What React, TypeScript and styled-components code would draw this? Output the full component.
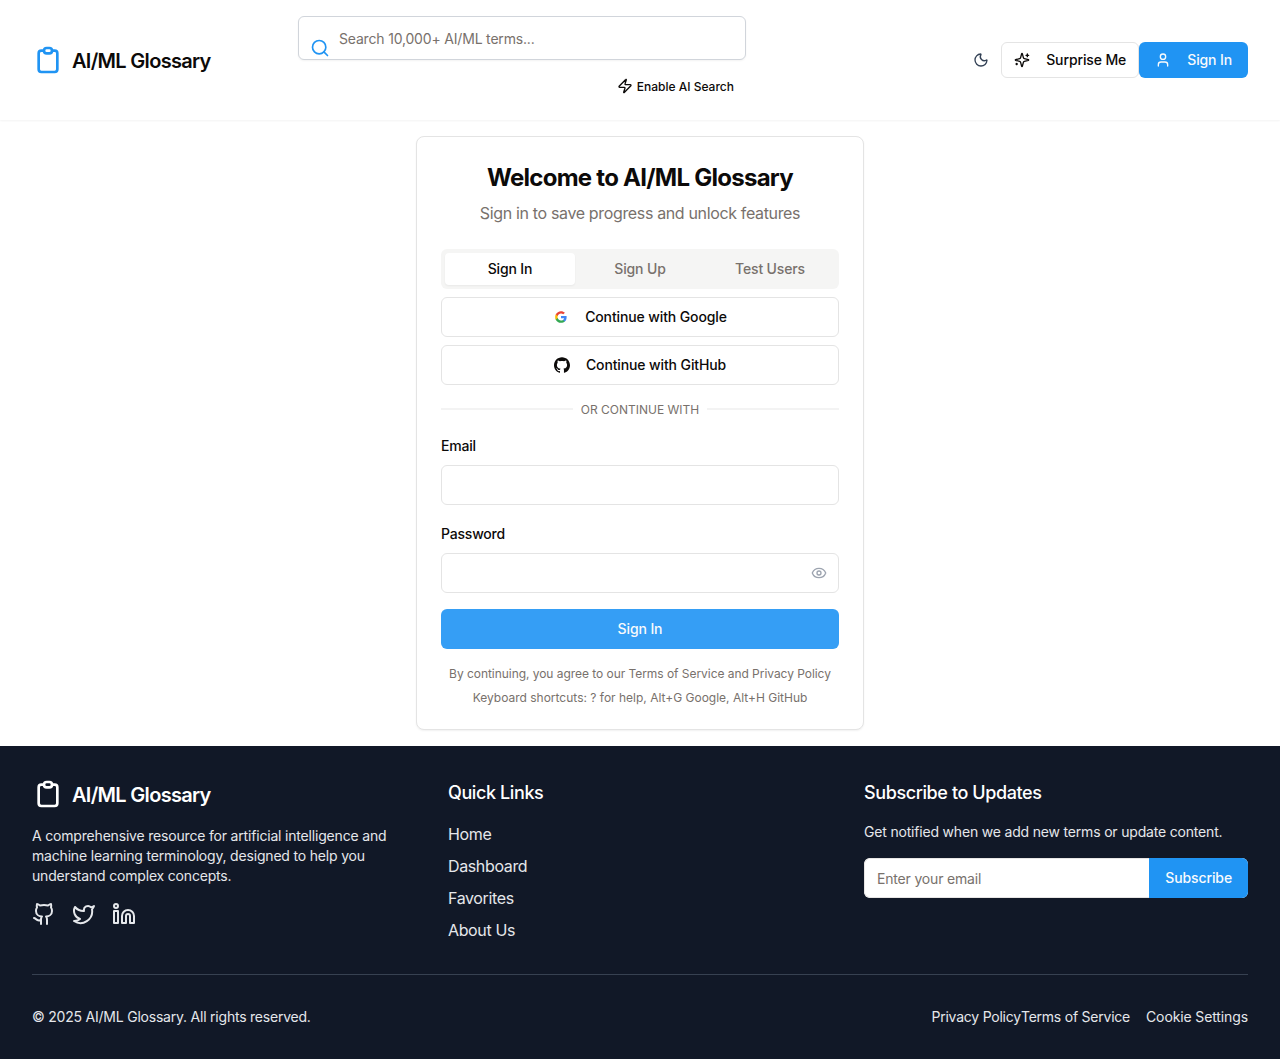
import React from "react";
import styled, { createGlobalStyle } from "styled-components";
import { Github, Linkedin, Moon, Search, Twitter, User } from "lucide-react";

const GlobalStyle = createGlobalStyle`
  *, *::before, *::after { box-sizing: border-box; }
  body {
    margin: 0;
    background: #fff;
    color: #0c0a09;
    font-family: Inter, "Liberation Sans", sans-serif;
    font-size: 16px;
    line-height: 24px;
    -webkit-font-smoothing: antialiased;
  }
  h1, h2, h3, p, ul { margin: 0; padding: 0; }
  ul { list-style: none; }
  a { color: inherit; text-decoration: none; }
  button, input { font-family: inherit; }
  svg { display: block; flex: none; }
`;

const Header = styled.header`
  display: flex;
  align-items: center;
  height: 120px;
  padding: 16px 32px;
  background: #fff;
  box-shadow: 0 1px 2px rgba(0, 0, 0, 0.05);
`;

const Brand = styled.a<{ $tone: string; $ink: string }>`
  display: flex;
  align-items: center;
  gap: 8px;
  width: 179px;
  height: 32px;
  color: ${(p) => p.$tone};
  span {
    color: ${(p) => p.$ink};
    font-size: 20px;
    line-height: 28px;
    font-weight: 600;
    letter-spacing: -0.69px;
    white-space: nowrap;
    padding-top: 1px;
  }
`;

const SearchColumn = styled.div`
  display: flex;
  flex-direction: column;
  width: 448px;
  height: 88px;
  margin-left: 87px;
`;

const SearchBox = styled.label`
  display: flex;
  height: 44px;
  padding: 0 12px 0 11px;
  gap: 9px;
  border: 1px solid #d1d5db;
  border-radius: 6px;
  background: #fff;
  box-shadow: 0 1px 2px rgba(0, 0, 0, 0.05);
  color: #2094f3;
  svg { margin-top: 21px; }
`;

const PlainInput = styled.input`
  flex: 1;
  min-width: 0;
  border: 0;
  outline: 0;
  padding: 0;
  background: transparent;
  font-size: 14px;
  letter-spacing: -0.18px;
  color: #0c0a09;
  &::placeholder { color: #78716c; opacity: 1; }
`;

const AiToggle = styled.button`
  display: flex;
  align-items: center;
  align-self: flex-end;
  gap: 4px;
  height: 28px;
  margin-top: 12px;
  padding: 0 12px;
  border: 0;
  background: transparent;
  color: #0c0a09;
  font-size: 12px;
  font-weight: 500;
`;

const Actions = styled.div`
  display: flex;
  align-items: center;
  margin-left: auto;
`;

const IconButton = styled.button`
  display: flex;
  align-items: center;
  justify-content: center;
  width: 40px;
  height: 36px;
  padding: 0;
  border: 0;
  background: transparent;
  color: #334155;
`;

const Button = styled.button<{ $solid?: boolean; $height?: number; $faded?: boolean }>`
  display: flex;
  align-items: center;
  justify-content: center;
  gap: 16px;
  height: ${(p) => p.$height ?? 40}px;
  padding: 0 ${(p) => (p.$solid ? 16 : 12)}px;
  border: ${(p) => (p.$solid ? "0" : "1px solid #e4e4e4")};
  border-radius: 6px;
  background: ${(p) => (p.$solid ? "#2094f3" : "#fff")};
  ${(p) => p.$faded && "background: #359ef5;"}
  color: ${(p) => (p.$solid ? "#f8fafc" : "#0c0a09")};
  font-size: 14px;
  font-weight: 500;
  letter-spacing: -0.12px;
  line-height: 20px;
  white-space: nowrap;
`;

const Main = styled.main`
  display: flex;
  justify-content: center;
  padding: 16px 0;
`;

const Card = styled.section`
  display: flex;
  flex-direction: column;
  width: 448px;
  height: 594px;
  padding: 24px 24px 20px;
  border: 1px solid #e4e4e4;
  border-radius: 8px;
  background: #fff;
  box-shadow: 0 1px 2px rgba(0, 0, 0, 0.06);
`;

const Title = styled.h1`
  padding-top: 1px;
  font-size: 24px;
  line-height: 32px;
  font-weight: 700;
  letter-spacing: -0.74px;
  text-align: center;
`;

const Subtitle = styled.p`
  margin: 7px 0 24px;
  color: #78716c;
  letter-spacing: -0.35px;
  text-align: center;
`;

const Tabs = styled.div`
  display: grid;
  flex: none;
  grid-template-columns: repeat(3, 1fr);
  height: 40px;
  padding: 4px;
  border-radius: 6px;
  background: #f5f5f4;
`;

const Tab = styled.button<{ $active?: boolean }>`
  padding: 0;
  border: 0;
  border-radius: 4px;
  background: ${(p) => (p.$active ? "#fff" : "transparent")};
  box-shadow: ${(p) => (p.$active ? "0 1px 2px rgba(0,0,0,0.05)" : "none")};
  color: ${(p) => (p.$active ? "#0c0a09" : "#78716c")};
  font-size: 14px;
  font-weight: 500;
  line-height: 20px;
  letter-spacing: -0.14px;
`;

const Providers = styled.div`
  display: grid;
  gap: 8px;
  margin-top: 8px;
`;

const Divider = styled.div`
  display: flex;
  flex: none;
  align-items: center;
  gap: 8px;
  margin: 16px 0;
  height: 16px;
  color: #78716c;
  font-size: 12px;
  line-height: 16px;
  span { padding-top: 2px; }
  &::before, &::after {
    content: "";
    flex: 1;
    height: 2px;
    background: #f3f3f3;
  }
`;

const Form = styled.form`
  display: grid;
  gap: 16px;
`;

const Field = styled.label`
  display: grid;
  gap: 7px;
  padding-top: 1px;
  font-size: 14px;
  line-height: 24px;
  font-weight: 500;
  letter-spacing: -0.2px;
`;

const InputFrame = styled.span`
  display: flex;
  align-items: center;
  height: 40px;
  padding: 0 11px;
  border: 1px solid #e4e4e4;
  border-radius: 6px;
  background: #fff;
  color: #9ca3af;
`;

const Note = styled.p<{ $top: number; $tracking?: number }>`
  margin-top: ${(p) => p.$top}px;
  color: #78716c;
  font-size: 12px;
  line-height: 16px;
  letter-spacing: ${(p) => p.$tracking ?? 0}px;
  text-align: center;
`;

const Footer = styled.footer`
  height: 313px;
  padding: 32px;
  background: #111827;
  color: #e5e7eb;
`;

const FooterGrid = styled.div`
  display: grid;
  grid-template-columns: repeat(3, 1fr);
  gap: 32px;
  height: 164px;
`;

const FooterText = styled.p<{ $top: number }>`
  margin-top: ${(p) => p.$top}px;
  font-size: 14px;
  line-height: 20px;
  letter-spacing: -0.185px;
`;

const Socials = styled.div`
  display: flex;
  gap: 16px;
  margin-top: 16px;
`;

const FooterHeading = styled.h3`
  padding-top: 1px;
  color: #fff;
  font-size: 18px;
  line-height: 28px;
  font-weight: 500;
  letter-spacing: -0.4px;
`;

const LinkList = styled.ul`
  display: grid;
  gap: 8px;
  margin-top: 15px;
  letter-spacing: -0.37px;
`;

const Subscribe = styled.form`
  display: flex;
  height: 40px;
  margin-top: 16px;
  border-radius: 6px;
  overflow: hidden;
  background: #fff;
  ${PlainInput} {
    padding-left: 12px;
    border: 1px solid #e7e5e4;
    border-right: 0;
    border-radius: 6px 0 0 6px;
  }
  ${Button} { border-radius: 0; }
`;

const Legal = styled.div`
  display: flex;
  align-items: center;
  justify-content: space-between;
  margin-top: 32px;
  padding-top: 32px;
  border-top: 1px solid #374151;
  font-size: 14px;
  line-height: 20px;
  letter-spacing: -0.22px;
`;

const LegalLinks = styled.div`
  display: flex;
  a { letter-spacing: -0.23px; }
  a:last-child { margin-left: 16px; letter-spacing: -0.12px; }
`;

const Clipboard = () => (
  <svg width="32" height="32" viewBox="0 0 24 24" fill="none" stroke="currentColor" strokeWidth="2" strokeLinecap="round" strokeLinejoin="round">
    <path d="M9 5H7a2 2 0 00-2 2v12a2 2 0 002 2h10a2 2 0 002-2V7a2 2 0 00-2-2h-2M9 5a2 2 0 002 2h2a2 2 0 002-2M9 5a2 2 0 012-2h2a2 2 0 012 2" />
  </svg>
);

const Bolt = () => (
  <svg width="16" height="16" viewBox="0 0 24 24" fill="none" stroke="currentColor" strokeWidth="2" strokeLinecap="round" strokeLinejoin="round">
    <path d="M4 14a1 1 0 0 1-.78-1.63l9.9-10.2a.5.5 0 0 1 .86.46l-1.92 6.02A1 1 0 0 0 13 10h7a1 1 0 0 1 .78 1.63l-9.9 10.2a.5.5 0 0 1-.86-.46l1.92-6.02A1 1 0 0 0 11 14z" />
  </svg>
);

const Sparkles = () => (
  <svg width="16" height="16" viewBox="0 0 24 24" fill="none" stroke="currentColor" strokeWidth="2" strokeLinecap="round" strokeLinejoin="round">
    <path d="M9.937 15.5A2 2 0 0 0 8.5 14.063l-6.135-1.582a.5.5 0 0 1 0-.962L8.5 9.936A2 2 0 0 0 9.937 8.5l1.582-6.135a.5.5 0 0 1 .963 0L14.063 8.5A2 2 0 0 0 15.5 9.937l6.135 1.581a.5.5 0 0 1 0 .964L15.5 14.063a2 2 0 0 0-1.437 1.437l-1.582 6.135a.5.5 0 0 1-.963 0z" />
    <path d="M20 3v4M22 5h-4M4 17v2M5 18H3" />
  </svg>
);

const EyeIcon = () => (
  <svg width="16" height="16" viewBox="0 0 24 24" fill="none" stroke="currentColor" strokeWidth="2" strokeLinecap="round" strokeLinejoin="round">
    <path d="M2.062 12.348a1 1 0 0 1 0-.696 10.75 10.75 0 0 1 19.876 0 1 1 0 0 1 0 .696 10.75 10.75 0 0 1-19.876 0" />
    <circle cx="12" cy="12" r="3" />
  </svg>
);

const GoogleMark = () => (
  <svg width="16" height="16" viewBox="-3 -3 30 30">
    <path fill="#4285F4" d="M22.56 12.25c0-.78-.07-1.53-.2-2.25H12v4.26h5.92c-.26 1.37-1.04 2.53-2.21 3.31v2.77h3.57c2.08-1.92 3.28-4.74 3.28-8.09z" />
    <path fill="#34A853" d="M12 23c2.97 0 5.46-.98 7.28-2.66l-3.57-2.77c-.98.66-2.23 1.06-3.71 1.06-2.86 0-5.29-1.93-6.16-4.53H2.18v2.84C3.99 20.53 7.7 23 12 23z" />
    <path fill="#FBBC05" d="M5.84 14.09c-.22-.66-.35-1.36-.35-2.09s.13-1.43.35-2.09V7.07H2.18C1.43 8.55 1 10.22 1 12s.43 3.45 1.18 4.93l3.66-2.84z" />
    <path fill="#EA4335" d="M12 5.38c1.62 0 3.06.56 4.21 1.64l3.15-3.15C17.45 2.09 14.97 1 12 1 7.7 1 3.99 3.47 2.18 7.07l3.66 2.84c.87-2.6 3.3-4.53 6.16-4.53z" />
  </svg>
);

const GithubMark = () => (
  <svg width="16" height="16" viewBox="0 0 24 24" fill="currentColor">
    <path d="M12 .297c-6.63 0-12 5.373-12 12 0 5.303 3.438 9.8 8.205 11.385.6.113.82-.258.82-.577 0-.285-.01-1.04-.015-2.04-3.338.724-4.042-1.61-4.042-1.61C4.422 18.07 3.633 17.7 3.633 17.7c-1.087-.744.084-.729.084-.729 1.205.084 1.838 1.236 1.838 1.236 1.07 1.835 2.809 1.305 3.495.998.108-.776.417-1.305.76-1.605-2.665-.3-5.466-1.332-5.466-5.93 0-1.31.465-2.38 1.235-3.22-.135-.303-.54-1.523.105-3.176 0 0 1.005-.322 3.3 1.23.96-.267 1.98-.399 3-.405 1.02.006 2.04.138 3 .405 2.28-1.552 3.285-1.23 3.285-1.23.645 1.653.24 2.873.12 3.176.765.84 1.23 1.91 1.23 3.22 0 4.61-2.805 5.625-5.475 5.92.42.36.81 1.096.81 2.22 0 1.606-.015 2.896-.015 3.286 0 .315.21.69.825.57C20.565 22.092 24 17.592 24 12.297c0-6.627-5.373-12-12-12" />
  </svg>
);

export default function App() {
  return (
    <>
      <GlobalStyle />
      <Header>
        <Brand href="#" $tone="#2094f3" $ink="#0c0a09">
          <Clipboard />
          <span>AI/ML Glossary</span>
        </Brand>
        <SearchColumn>
          <SearchBox>
            <Search size={20} />
            <PlainInput placeholder="Search 10,000+ AI/ML terms..." />
          </SearchBox>
          <AiToggle>
            <Bolt />
            Enable AI Search
          </AiToggle>
        </SearchColumn>
        <Actions>
          <IconButton aria-label="Toggle theme">
            <Moon size={16} />
          </IconButton>
          <Button $height={36}>
            <Sparkles />
            Surprise Me
          </Button>
          <Button $solid $height={36}>
            <User size={16} />
            Sign In
          </Button>
        </Actions>
      </Header>
      <Main>
        <Card>
          <Title>Welcome to AI/ML Glossary</Title>
          <Subtitle>Sign in to save progress and unlock features</Subtitle>
          <Tabs>
            <Tab $active>Sign In</Tab>
            <Tab>Sign Up</Tab>
            <Tab>Test Users</Tab>
          </Tabs>
          <Providers>
            <Button>
              <GoogleMark />
              Continue with Google
            </Button>
            <Button>
              <GithubMark />
              Continue with GitHub
            </Button>
          </Providers>
          <Divider>
            <span>OR CONTINUE WITH</span>
          </Divider>
          <Form>
            <Field>
              Email
              <InputFrame>
                <PlainInput type="email" />
              </InputFrame>
            </Field>
            <Field>
              Password
              <InputFrame>
                <PlainInput type="password" />
                <EyeIcon />
              </InputFrame>
            </Field>
            <Button $solid $faded type="button">
              Sign In
            </Button>
          </Form>
          <Note $top={17} $tracking={-0.045}>
            By continuing, you agree to our Terms of Service and Privacy Policy
          </Note>
          <Note $top={8}>Keyboard shortcuts: ? for help, Alt+G Google, Alt+H GitHub</Note>
        </Card>
      </Main>
      <Footer>
        <FooterGrid>
          <div>
            <Brand href="#" $tone="#ffffff" $ink="#ffffff">
              <Clipboard />
              <span>AI/ML Glossary</span>
            </Brand>
            <FooterText $top={16}>
              A comprehensive resource for artificial intelligence and
              <br />
              machine learning terminology, designed to help you
              <br />
              understand complex concepts.
            </FooterText>
            <Socials>
              <Github />
              <Twitter />
              <Linkedin />
            </Socials>
          </div>
          <div>
            <FooterHeading>Quick Links</FooterHeading>
            <LinkList>
              {["Home", "Dashboard", "Favorites", "About Us"].map((label) => (
                <li key={label}>
                  <a href="#">{label}</a>
                </li>
              ))}
            </LinkList>
          </div>
          <div>
            <FooterHeading>Subscribe to Updates</FooterHeading>
            <FooterText $top={15}>Get notified when we add new terms or update content.</FooterText>
            <Subscribe>
              <PlainInput placeholder="Enter your email" />
              <Button $solid type="button">
                Subscribe
              </Button>
            </Subscribe>
          </div>
        </FooterGrid>
        <Legal>
          <span>© 2025 AI/ML Glossary. All rights reserved.</span>
          <LegalLinks>
            <a href="#">Privacy Policy</a>
            <a href="#">Terms of Service</a>
            <a href="#">Cookie Settings</a>
          </LegalLinks>
        </Legal>
      </Footer>
    </>
  );
}
